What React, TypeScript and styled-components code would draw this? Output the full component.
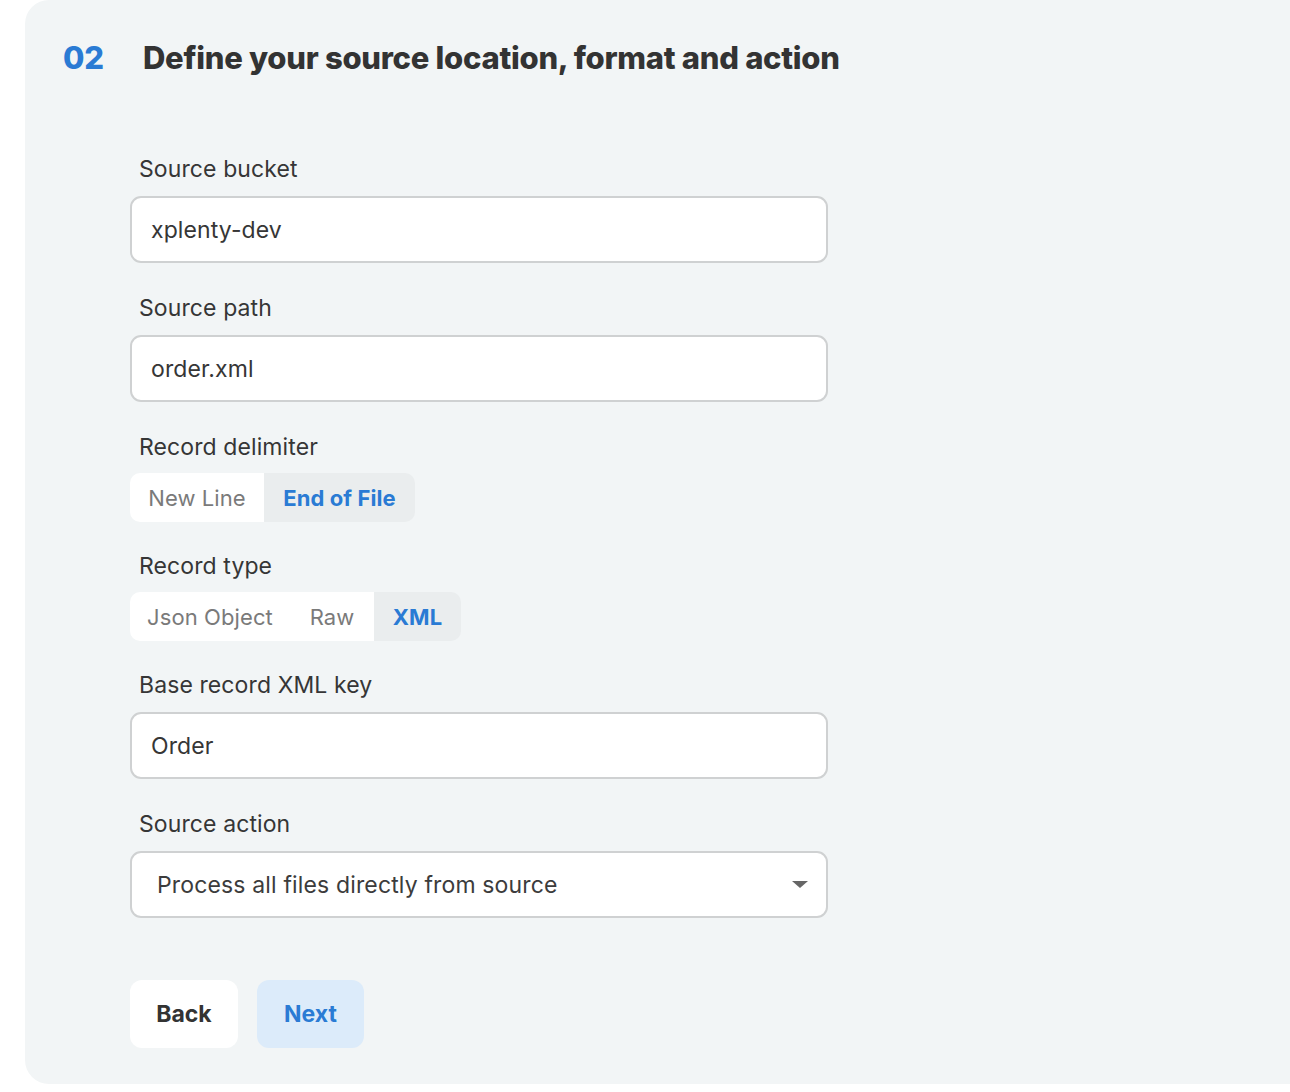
import React, { useState } from "react";
import styled, { createGlobalStyle } from "styled-components";

const GlobalStyle = createGlobalStyle`
  html, body {
    margin: 0;
    padding: 0;
    background: #ffffff;
  }
  body {
    font-family: Inter, "Noto Sans", "Liberation Sans", sans-serif;
    color: #333333;
  }
`;

const Page = styled.div`
  padding-left: 25px;
  height: 1092px;
  box-sizing: border-box;
`;

const Panel = styled.section`
  background: #f2f5f6;
  border-radius: 24px 0 0 24px;
  height: 1084px;
  box-sizing: border-box;
  padding: 39px 0 0 38px;
`;

const Header = styled.h2`
  display: flex;
  align-items: baseline;
  margin: 0;
  font-size: 31px;
  font-weight: 800;
  letter-spacing: -0.28px;
  color: #333333;
`;

const StepNumber = styled.span`
  width: 80px;
  color: #2a7bd4;
`;

const Form = styled.form`
  display: flex;
  flex-direction: column;
  width: 698px;
  margin: 78px 0 0 67px;
`;

// segmented fields sit a little tighter than the text inputs
const Field = styled.div<{ $tight?: boolean }>`
  display: flex;
  flex-direction: column;
  margin-bottom: ${(p) => (p.$tight ? 29 : 30)}px;
`;

const Label = styled.label`
  font-size: 23px;
  line-height: 30px;
  padding-left: 9px;
  margin-bottom: 12px;
  color: #363636;
  letter-spacing: 0.1px;
`;

const TextInput = styled.input`
  height: 67px;
  box-sizing: border-box;
  border: 2px solid #cfd1d2;
  border-radius: 11px;
  background: #ffffff;
  padding: 0 19px;
  font-family: inherit;
  font-size: 23px;
  letter-spacing: 0.1px;
  color: #363636;
  outline: none;
`;

const SelectBox = styled.div`
  height: 67px;
  box-sizing: border-box;
  border: 2px solid #cfd1d2;
  border-radius: 11px;
  background: #ffffff;
  padding: 0 25px;
  display: flex;
  align-items: center;
  justify-content: space-between;
  font-size: 23px;
  letter-spacing: 0.15px;
  color: #3c3c3c;
`;

const Caret = styled.span`
  width: 0;
  height: 0;
  border-left: 8px solid transparent;
  border-right: 8px solid transparent;
  border-top: 7px solid #666666;
  margin-right: -7px;
`;

const Segmented = styled.div`
  display: inline-flex;
  align-self: flex-start;
  height: 49px;
  border-radius: 10px;
  overflow: hidden;
  margin-top: -1px;
`;

const Segment = styled.button<{ $active?: boolean; $width: number }>`
  width: ${(p) => p.$width}px;
  border: none;
  padding: 0;
  font-family: inherit;
  font-size: 22px;
  letter-spacing: 0.1px;
  font-weight: ${(p) => (p.$active ? 700 : 400)};
  color: ${(p) => (p.$active ? "#2a7bd4" : "#7a7a7a")};
  background: ${(p) => (p.$active ? "#eaedee" : "#ffffff")};
  cursor: pointer;
`;

const Actions = styled.div`
  display: flex;
  gap: 19px;
  margin-top: 32px;
`;

const Button = styled.button<{ $primary?: boolean; $width: number }>`
  width: ${(p) => p.$width}px;
  height: 68px;
  border: none;
  border-radius: 12px;
  font-family: inherit;
  font-size: 23px;
  font-weight: 700;
  color: ${(p) => (p.$primary ? "#2a7bd4" : "#333333")};
  background: ${(p) => (p.$primary ? "#dcebfa" : "#ffffff")};
  cursor: pointer;
`;

type Option = { label: string; width: number };

const SegmentGroup: React.FC<{ options: Option[]; initial: string }> = ({
  options,
  initial,
}) => {
  const [value, setValue] = useState(initial);
  return (
    <Segmented>
      {options.map((o) => (
        <Segment
          key={o.label}
          type="button"
          $width={o.width}
          $active={value === o.label}
          onClick={() => setValue(o.label)}
        >
          {o.label}
        </Segment>
      ))}
    </Segmented>
  );
};

export default function App() {
  return (
    <>
      <GlobalStyle />
      <Page>
        <Panel>
          <Header>
            <StepNumber>02</StepNumber>
            Define your source location, format and action
          </Header>
          <Form onSubmit={(e) => e.preventDefault()}>
            <Field>
              <Label>Source bucket</Label>
              <TextInput defaultValue="xplenty-dev" />
            </Field>
            <Field>
              <Label>Source path</Label>
              <TextInput defaultValue="order.xml" />
            </Field>
            <Field $tight>
              <Label>Record delimiter</Label>
              <SegmentGroup
                initial="End of File"
                options={[
                  { label: "New Line", width: 134 },
                  { label: "End of File", width: 151 },
                ]}
              />
            </Field>
            <Field $tight>
              <Label>Record type</Label>
              <SegmentGroup
                initial="XML"
                options={[
                  { label: "Json Object", width: 160 },
                  { label: "Raw", width: 84 },
                  { label: "XML", width: 87 },
                ]}
              />
            </Field>
            <Field>
              <Label>Base record XML key</Label>
              <TextInput defaultValue="Order" />
            </Field>
            <Field>
              <Label>Source action</Label>
              <SelectBox>
                Process all files directly from source
                <Caret />
              </SelectBox>
            </Field>
            <Actions>
              <Button type="button" $width={108}>
                Back
              </Button>
              <Button type="submit" $primary $width={107}>
                Next
              </Button>
            </Actions>
          </Form>
        </Panel>
      </Page>
    </>
  );
}
